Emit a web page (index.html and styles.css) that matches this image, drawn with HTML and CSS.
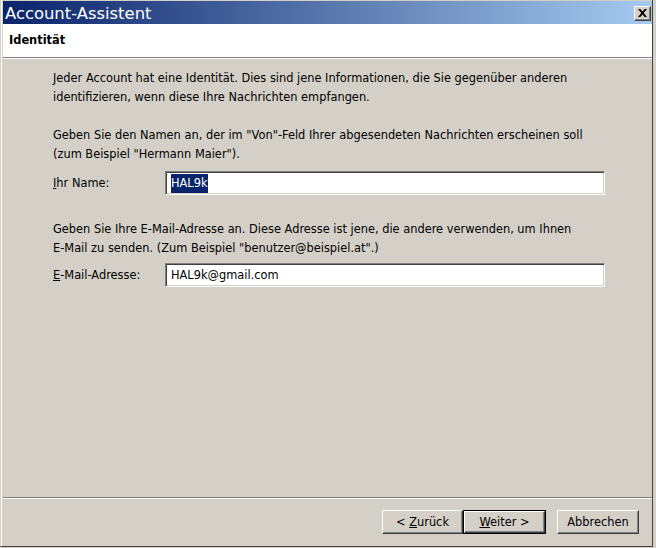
FILE: index.html
```html
<!DOCTYPE html>
<html lang="de">
<head>
<meta charset="utf-8">
<title>Account-Assistent</title>
<link rel="stylesheet" href="styles.css">
</head>
<body>
<div class="window">
  <div class="titlebar">
    <span class="title">Account-Assistent</span>
    <span class="close">
      <svg width="9" height="8" viewBox="0 0 9 8"><path d="M0 0h2.3l2.2 2.5L6.7 0H9L5.7 4 9 8H6.7L4.5 5.5 2.3 8H0l3.3-4z" fill="#000"/></svg>
    </span>
  </div>
  <div class="header">Identität</div>
  <div class="content">
    <p class="para p1">Jeder Account hat eine Identität. Dies sind jene Informationen, die Sie gegenüber anderen<br>identifizieren, wenn diese Ihre Nachrichten empfangen.</p>
    <p class="para p2">Geben Sie den Namen an, der im "Von"-Feld Ihrer abgesendeten Nachrichten erscheinen soll<br>(zum Beispiel "Hermann Maier").</p>
    <div class="row">
      <span class="label"><u>I</u>hr Name:</span>
      <div class="field"><span class="sel">HAL9k</span></div>
    </div>
    <p class="para p3">Geben Sie Ihre E-Mail-Adresse an. Diese Adresse ist jene, die andere verwenden, um Ihnen<br>E-Mail zu senden. (Zum Beispiel "benutzer@beispiel.at".)</p>
    <div class="row row-mail">
      <span class="label"><u>E</u>-Mail-Adresse:</span>
      <div class="field">HAL9k@gmail.com</div>
    </div>
  </div>
  <div class="footer">
    <div class="btn"><span>&lt; <u>Z</u>urück</span></div>
    <div class="btn default"><span class="inner"><span><u>W</u>eiter &gt;</span></span></div>
    <div class="btn cancel"><span>Abbrechen</span></div>
  </div>
</div>
</body>
</html>
```
FILE: styles.css
```css
html, body {
  margin: 0;
  padding: 0;
}
body {
  width: 656px;
  height: 548px;
  background: #d4d0c8;
  overflow: hidden;
  font-family: "DejaVu Sans", sans-serif;
  font-size: 11.4px;
  color: #000;
}
.window {
  width: 653px;
  height: 547px;
  box-sizing: border-box;
  border-left: 1px solid #d4d0c8;
  border-right: 1px solid #404040;
  border-bottom: 1px solid #404040;
  padding: 1px 0 0 2px;
  box-shadow: inset 1px 0 #fff;
  display: flex;
  flex-direction: column;
  background: #d4d0c8;
}
.titlebar {
  height: 23px;
  background: linear-gradient(to right, #0a246a, #a6caf0);
  display: flex;
  align-items: center;
  justify-content: space-between;
  padding: 0 1px 0 2px;
}
.title {
  color: #fff;
  font-size: 16.4px;
  line-height: 23px;
  padding-top: 1px;
}
.close {
  width: 17px;
  height: 15px;
  box-sizing: border-box;
  background: #d4d0c8;
  border-top: 1px solid #fff;
  border-left: 1px solid #fff;
  border-right: 1px solid #404040;
  border-bottom: 1px solid #404040;
  box-shadow: inset -1px -1px #808080;
  display: flex;
  align-items: center;
  justify-content: center;
  margin-top: 1px;
}
.header {
  height: 33px;
  background: #fff;
  font-weight: bold;
  line-height: 33px;
  padding-left: 6px;
  border-bottom: 1px solid #808080;
  box-shadow: 0 1px #fff;
}
.content {
  flex: 1;
  padding: 11px 0 0 50px;
}
.para {
  margin: 0;
  line-height: 19px;
}
.p2 { margin-top: 19px; }
.p3 { margin-top: 25px; }
.row {
  display: flex;
  align-items: center;
  margin-top: 7px;
}
.row-mail { margin-top: 5px; }
.label {
  width: 112px;
}
.field {
  width: 440px;
  height: 24px;
  box-sizing: border-box;
  background: #fff;
  border-top: 1px solid #808080;
  border-left: 1px solid #808080;
  border-right: 1px solid #fff;
  border-bottom: 1px solid #fff;
  box-shadow: inset 1px 1px #404040, inset -1px -1px #d4d0c8;
  padding: 0 5px;
  line-height: 22px;
  white-space: nowrap;
}
.sel {
  background: #0a246a;
  color: #fff;
  padding: 2px 0 3px;
}
.footer {
  height: 49px;
  box-sizing: border-box;
  border-top: 1px solid #808080;
  box-shadow: inset 0 1px #fff;
  display: flex;
  justify-content: flex-end;
  align-items: flex-start;
  padding: 12px 13px 0 0;
}
.btn {
  width: 81px;
  height: 24px;
  box-sizing: border-box;
  border-top: 1px solid #fff;
  border-left: 1px solid #fff;
  border-right: 1px solid #404040;
  border-bottom: 1px solid #404040;
  box-shadow: inset -1px -1px #808080;
  display: flex;
  align-items: center;
  justify-content: center;
  white-space: pre;
}
.btn.default {
  width: 83px;
  border: 1px solid #000;
  box-shadow: none;
}
.btn.default .inner {
  width: 100%;
  height: 100%;
  box-sizing: border-box;
  border-top: 1px solid #fff;
  border-left: 1px solid #fff;
  border-right: 1px solid #404040;
  border-bottom: 1px solid #404040;
  box-shadow: inset -1px -1px #808080;
  display: flex;
  align-items: center;
  justify-content: center;
}
.btn.cancel {
  width: 82px;
  margin-left: 11px;
}
```
